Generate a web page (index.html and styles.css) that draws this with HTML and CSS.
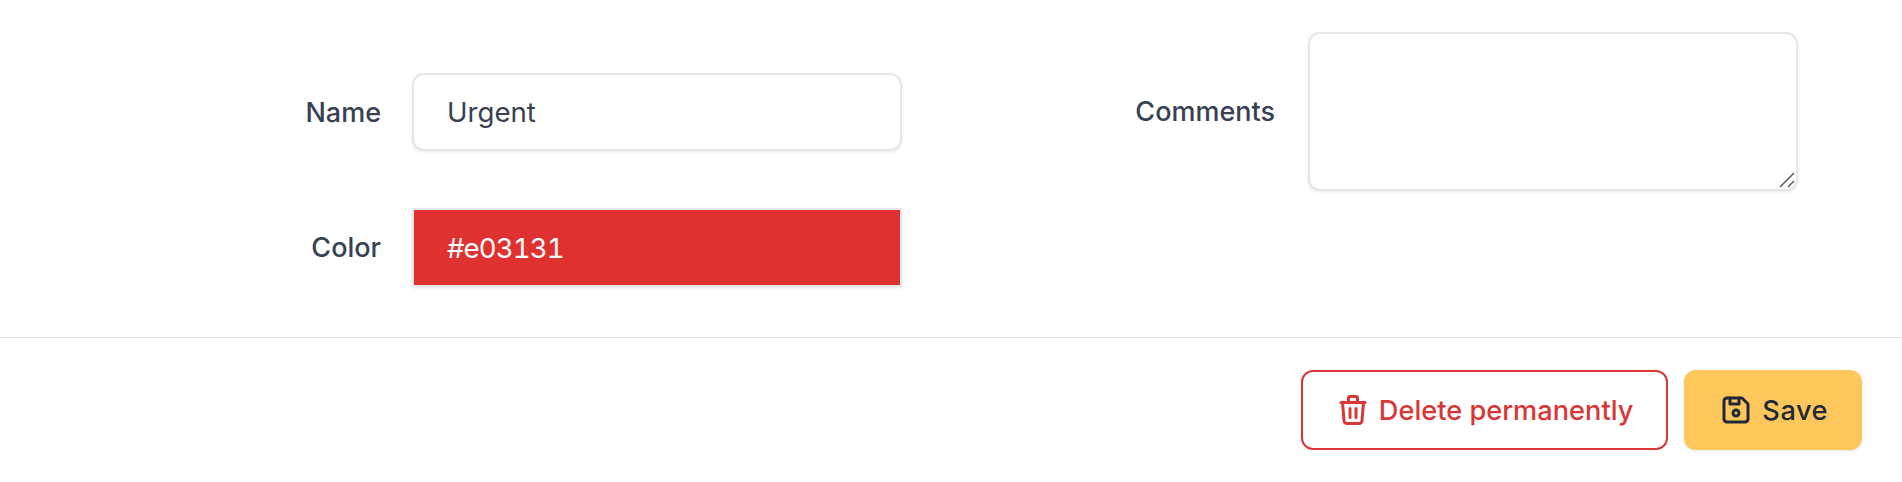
FILE: index.html
```html
<!DOCTYPE html>
<html lang="en">
<head>
    <meta charset="UTF-8">
    <title>Edit label</title>
    <link rel="stylesheet" href="styles.css">
</head>

<body>
    <form class="label-form">
        <div class="fields">
            <div class="field-column field-column-left">
                <div class="field">
                    <label for="label-name">Name</label>
                    <input type="text" id="label-name" class="control" value="Urgent">
                </div>
                <div class="field">
                    <label for="label-color">Color</label>
                    <input type="text" id="label-color" class="control control-color" value="#e03131">
                </div>
            </div>
            <div class="field-column field-column-right">
                <div class="field">
                    <label for="label-comments">Comments</label>
                    <div class="area-wrap">
                        <textarea id="label-comments" class="control control-area"></textarea>
                        <svg class="grip" viewBox="0 0 16 16" aria-hidden="true">
                            <path d="M1 15L15 1"/>
                            <path d="M9 15L15 9"/>
                        </svg>
                    </div>
                </div>
            </div>
        </div>

        <div class="actions">
            <button type="button" class="btn btn-delete">
                <svg class="icon" viewBox="0 0 24 24" aria-hidden="true">
                    <path d="M4 7h16"/>
                    <path d="M10 11v6"/>
                    <path d="M14 11v6"/>
                    <path d="M5 7l1 12a2 2 0 0 0 2 2h8a2 2 0 0 0 2 -2l1 -12"/>
                    <path d="M9 7v-3a1 1 0 0 1 1 -1h4a1 1 0 0 1 1 1v3"/>
                </svg>
                Delete permanently
            </button>
            <button type="submit" class="btn btn-save">
                <svg class="icon" viewBox="0 0 24 24" aria-hidden="true">
                    <path d="M6 4h10l4 4v10a2 2 0 0 1 -2 2h-12a2 2 0 0 1 -2 -2v-12a2 2 0 0 1 2 -2"/>
                    <circle cx="12" cy="14" r="2"/>
                    <path d="M14 4v4h-6v-4"/>
                </svg>
                Save
            </button>
        </div>
    </form>
</body>
</html>
```

FILE: styles.css
```css
* {
    box-sizing: border-box;
}

body {
    margin: 0;
    background: #fff;
    color: #374151;
    font-family: Inter, "Liberation Sans", sans-serif;
}

.fields {
    display: flex;
    gap: 232px;
    padding: 32px 0 50px 261px;
}

.field-column {
    display: flex;
    flex-direction: column;
    gap: 57px;
    width: 641px;
}

.field-column-left {
    padding-top: 41px;
}

.field-column-right {
    width: 664px;
}

.field {
    display: grid;
    grid-template-columns: 120px 490px;
    column-gap: 31px;
    align-items: center;
}

.field-column-right .field {
    grid-template-columns: 141px 490px;
    column-gap: 33px;
}

.field label {
    text-align: right;
    font-size: 27px;
    font-weight: 450;
    color: #374151;
}

.control {
    display: block;
    width: 100%;
    height: 78px;
    padding: 0 33px;
    font: 400 27.6px Inter, "Liberation Sans", sans-serif;
    color: #374151;
    background: #fff;
    border: 2px solid #e5e7eb;
    border-radius: 12px;
    box-shadow: 0 1px 3px rgba(0, 0, 0, 0.1);
    outline: none;
}

.control-color {
    height: 79px;
    color: #fff;
    background: #e03131;
    border-radius: 0;
    font-variant-numeric: tabular-nums;
    letter-spacing: -0.9px;
}

.control-area {
    height: 159px;
    resize: none;
}

.area-wrap {
    position: relative;
}

.grip {
    position: absolute;
    right: 3px;
    bottom: 3px;
    width: 16px;
    height: 16px;
    fill: none;
    stroke: #555;
    stroke-width: 1.5;
}

.actions {
    display: flex;
    justify-content: flex-end;
    gap: 16px;
    padding: 32px 40px 32px 0;
    border-top: 1px solid #e0e0e3;
}

.btn {
    display: flex;
    align-items: center;
    gap: 8px;
    height: 80px;
    padding: 0 34px;
    font: 450 27.2px Inter, "Liberation Sans", sans-serif;
    border-radius: 12px;
    cursor: pointer;
}

.icon {
    width: 36px;
    height: 36px;
    fill: none;
    stroke: currentColor;
    stroke-width: 2;
    stroke-linecap: round;
    stroke-linejoin: round;
}

.btn-delete {
    padding: 0 33px 0 32px;
    color: #d93636;
    background: #fff;
    border: 2px solid #d93636;
}

.btn-save {
    color: #1f2937;
    background: #fdc75c;
    border: none;
    box-shadow: 0 1px 3px rgba(0, 0, 0, 0.1);
    letter-spacing: 0.5px;
}
```
